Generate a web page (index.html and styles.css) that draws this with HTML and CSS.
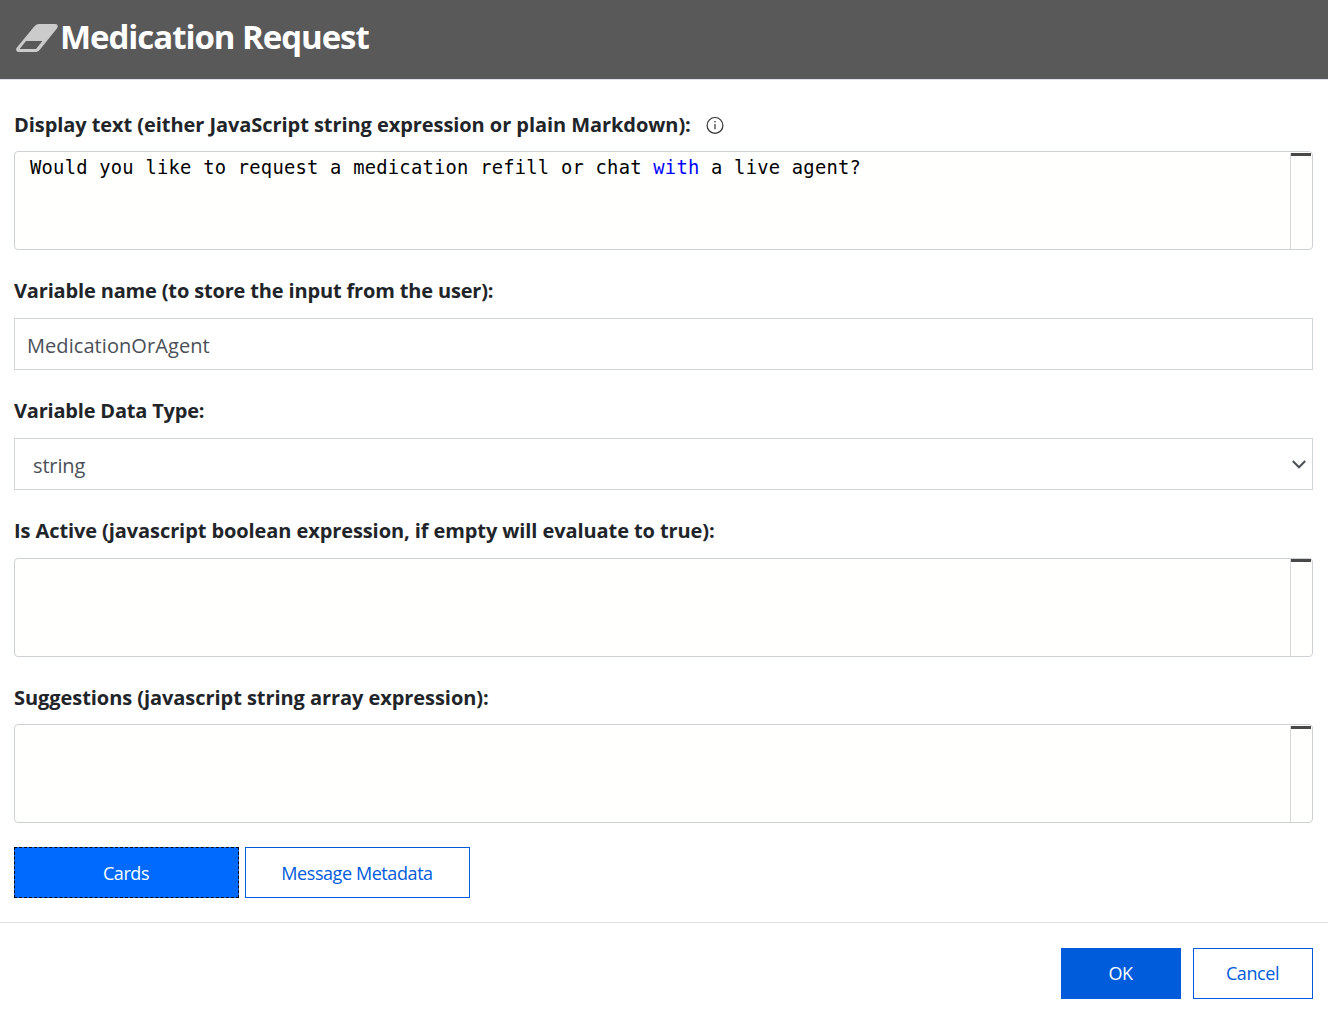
FILE: index.html
```html
<!DOCTYPE html>
<html lang="en">
<head>
<meta charset="utf-8">
<title>Medication Request</title>
<link rel="stylesheet" href="styles.css">
</head>
<body>
<div class="dialog">
  <header class="header">
    <svg class="eraser" width="42" height="28" viewBox="0 0 42 28" fill="#cbcbcb">
      <path fill-rule="evenodd" d="M22.5 0H39Q43.2.3 41.1 4.3L24.2 25.2Q22.3 28 20.5 28H2Q-.8 27.2.5 24.1L18 2.7Q20.2 0 22.5 0ZM10 17L3.6 25H20L26.4 17Z"/>
    </svg>
    <h1 class="title"><span>Medication Request</span></h1>
  </header>
  <main class="content">
    <section class="group">
      <div class="label"><span class="t-display">Display text (either JavaScript string expression or plain Markdown):</span>
        <svg class="info" width="18" height="18" viewBox="0 0 18 18" fill="none" stroke="#333"><circle cx="9" cy="9.4" r="7.9" stroke-width="1.2"/><path d="M9 7.9V13.2M9 5V6.4" stroke-width="1.2"/></svg>
      </div>
      <div class="editor"><div class="code"><span>Would you like to request a medication refill or chat <span class="keyword">with</span> a live agent?</span></div><div class="ruler"></div></div>
    </section>
    <section class="group raised">
      <div class="label"><span class="t-name">Variable name (to store the input from the user):</span></div>
      <div class="field"><span class="v-name">MedicationOrAgent</span></div>
    </section>
    <section class="group raised">
      <div class="label"><span class="t-type">Variable Data Type:</span></div>
      <div class="field select"><span class="v-type">string</span>
        <svg class="chevron" width="14" height="9" viewBox="0 0 14 9" fill="none" stroke="#495057" stroke-width="2"><path d="M.8 1L7 7.3L13.2 1"/></svg>
      </div>
    </section>
    <section class="group raised">
      <div class="label"><span class="t-active">Is Active (javascript boolean expression, if empty will evaluate to true):</span></div>
      <div class="editor"><div class="code"></div><div class="ruler flush"></div></div>
    </section>
    <section class="group last">
      <div class="label"><span class="t-suggest">Suggestions (javascript string array expression):</span></div>
      <div class="editor"><div class="code"></div><div class="ruler"></div></div>
    </section>
    <div class="tabs">
      <button class="btn wide focused"><span>Cards</span></button>
      <button class="btn wide"><span>Message Metadata</span></button>
    </div>
  </main>
  <footer class="footer">
    <button class="btn primary"><span>OK</span></button>
    <button class="btn"><span>Cancel</span></button>
  </footer>
</div>
</body>
</html>
```
FILE: styles.css
```css
* { box-sizing: border-box; }
body { margin: 0; background: #fff; color: #212529; font-family: "Open Sans", "Noto Sans", sans-serif; }
.dialog { height: 1017px; display: flex; flex-direction: column; overflow: hidden; }
.header { height: 80px; flex: none; display: flex; background: #595959; border-bottom: 1px solid #dee2e6; padding: 24px 0 0 16px; }
.eraser { flex: none; }
.title { margin: -10px 0 0 2px; font-size: 33px; line-height: 46px; font-weight: 700; color: #fff; letter-spacing: -1.05px; white-space: nowrap; }
.content { padding: 29px 15px 24px 14px; }
.group { margin-bottom: 26px; }
.group:nth-of-type(4) { margin-bottom: 25px; }
.group.last { margin-bottom: 24px; }
.label { display: flex; align-items: center; height: 30px; margin-bottom: 12px; font-size: 20px; font-weight: 700; letter-spacing: -0.2px; white-space: nowrap; }
.raised .label { height: 28px; margin-bottom: 14px; }
.t-display { letter-spacing: -0.065px; }
.t-name { letter-spacing: -0.16px; }
.t-active { letter-spacing: -0.09px; }
.t-suggest { letter-spacing: -0.06px; }
.info { margin: 2px 0 0 15px; }
.editor { height: 99px; display: flex; border: 1px solid #ced1d4; border-radius: 4px; background: #fffffe; }
.code { flex: 1; padding: 2px 0 0 15px; font: 18.8px/28px "DejaVu Sans Mono", monospace; letter-spacing: 0.235px; color: #000; white-space: pre; }
.keyword { color: #00f; }
.ruler { width: 22px; margin-top: 1px; border-left: 1px solid #d8d8d8; background: linear-gradient(#484848, #484848) 0 0 / 20px 3px no-repeat; }
.flush { margin-top: 0; }
.field { height: 52px; display: flex; align-items: center; border: 1px solid #ced4da; padding: 2px 6px 0 12px; font-size: 20px; color: #495057; }
.v-name { letter-spacing: 0.07px; }
.v-type { letter-spacing: -0.15px; }
.select { justify-content: space-between; padding-left: 18px; }
.chevron { margin-bottom: 2px; }
.tabs { display: flex; gap: 6px; }
.btn { width: 120px; height: 51px; padding: 0 1px 0 0; border: 1px solid #005cdb; background: #fff; color: #005cdb; font: 400 18px "Open Sans", "Noto Sans", sans-serif; letter-spacing: -0.42px; }
.wide { width: 225px; }
.focused { background: #006aff; border: 1px dashed #000; color: #fff; }
.primary { background: #005cdb; color: #fff; }
.footer { flex: 1; display: flex; justify-content: flex-end; gap: 12px; border-top: 1px solid #dee2e6; padding: 25px 15px 0 0; }
.footer .btn { padding-bottom: 2px; }
```
